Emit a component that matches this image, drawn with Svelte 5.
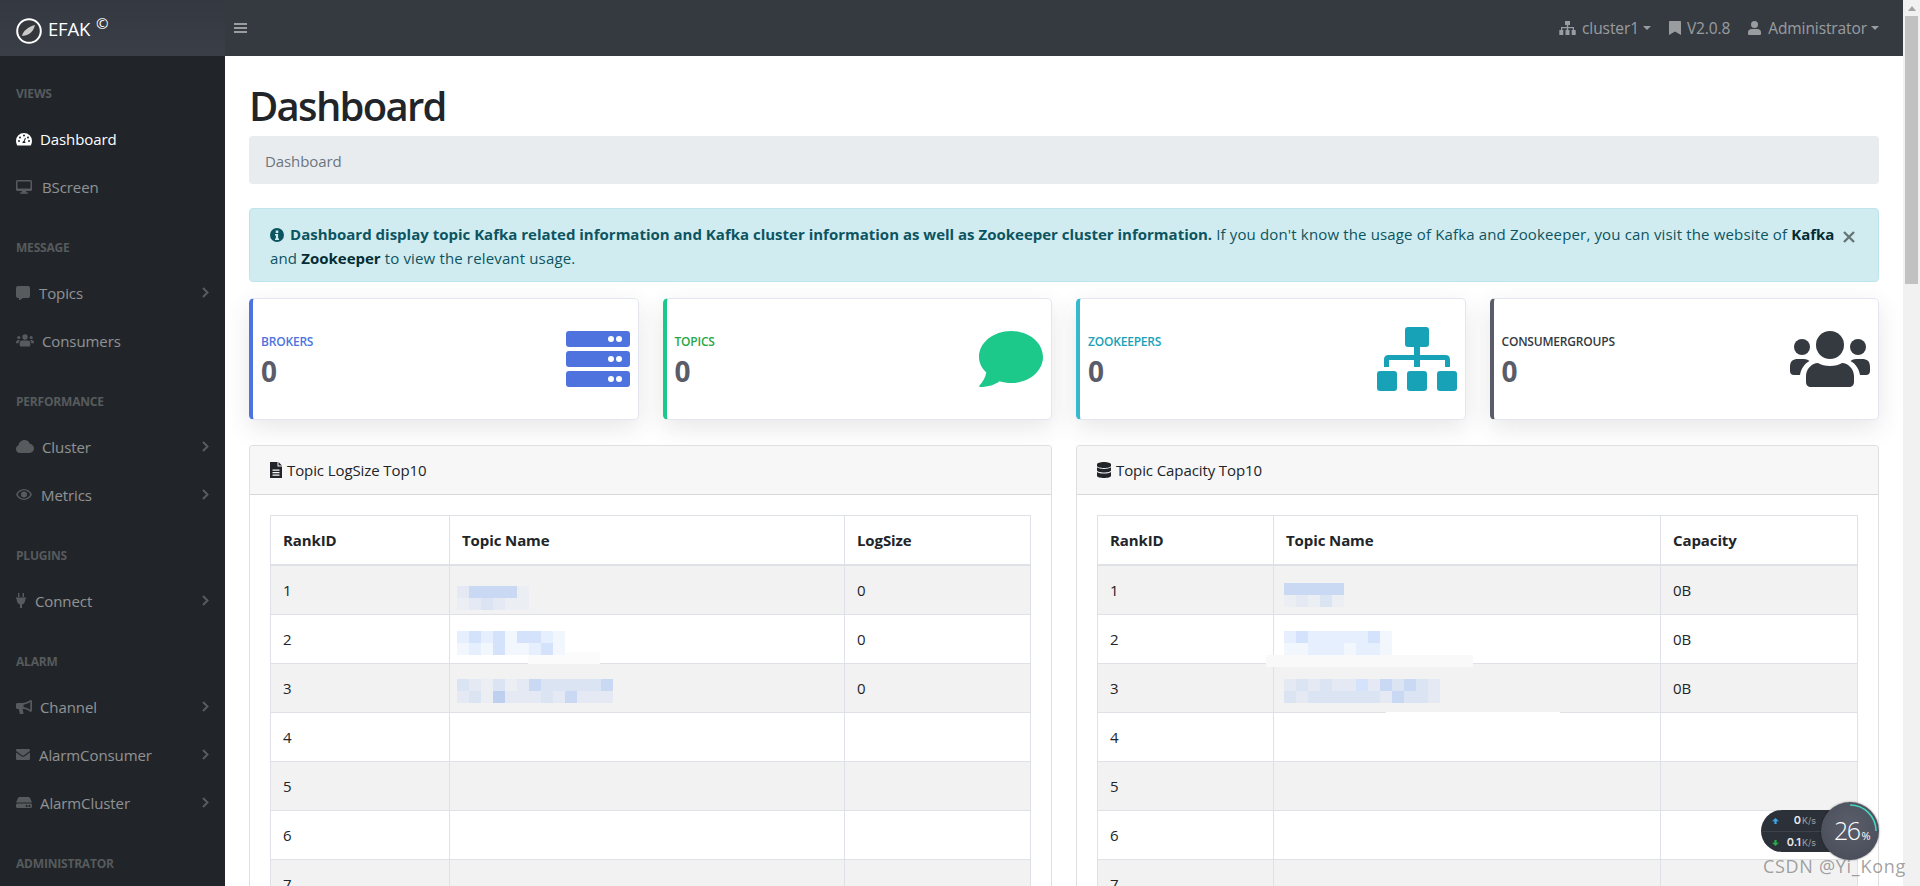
<script>
  const sideMenu = [
    { heading: 'VIEWS', items: [
      { label: 'Dashboard', icon: 'gauge', active: true, gap: 8 },
      { label: 'BScreen', icon: 'desktop', gap: 10 }
    ]},
    { heading: 'MESSAGE', items: [
      { label: 'Topics', icon: 'comment', more: true, gap: 9 },
      { label: 'Consumers', icon: 'users', gap: 8 }
    ]},
    { heading: 'PERFORMANCE', items: [
      { label: 'Cluster', icon: 'cloud', more: true, gap: 8 },
      { label: 'Metrics', icon: 'eye', more: true, gap: 9 }
    ]},
    { heading: 'PLUGINS', items: [
      { label: 'Connect', icon: 'plug', more: true, gap: 9 }
    ]},
    { heading: 'ALARM', items: [
      { label: 'Channel', icon: 'bullhorn', more: true, gap: 8 },
      { label: 'AlarmConsumer', icon: 'envelope', more: true, gap: 9 },
      { label: 'AlarmCluster', icon: 'hdd', more: true, gap: 8 }
    ]},
    { heading: 'ADMINISTRATOR', items: [] }
  ];

  const stats = [
    { label: 'BROKERS', tone: 'blue', icon: 'server' },
    { label: 'TOPICS', tone: 'green', icon: 'bubble' },
    { label: 'ZOOKEEPERS', tone: 'teal', icon: 'sitemap' },
    { label: 'CONSUMERGROUPS', tone: 'dark', icon: 'people' }
  ];

  const A = '#c9d8f3', B = '#dbe4f3', C = '#e4e9f3', D = '#d4e3fb', E = '#e6effd', F = '#f2f6fd', G = '#bed0f0', H = '#ebeef3';
  const panels = [
    { title: 'Topic LogSize Top10', icon: 'file', col: 'LogSize', unit: '0',
      widths: [179, 395, 186],
      masks: [
        { dx: 7, dy: 20, rows: [[C, A, A, A, A, H], [H, C, B, C, H, H]] },
        { dx: 7, dy: 16, rows: [[E, D, E, D, F, D, D, E, F], [F, E, F, D, F, F, E, D, F]],
          smear: { x: 78, y: 37, w: 72, h: 12, c: '#fbfbfb' } },
        { dx: 7, dy: 15, rows: [[B, C, H, B, H, C, A, B, B, B, B, B, A], [C, B, H, G, C, C, C, B, C, A, C, C, C]] }
      ] },
    { title: 'Topic Capacity Top10', icon: 'database', col: 'Capacity', unit: '0B',
      widths: [176, 387, 197],
      masks: [
        { dx: 10, dy: 17, rows: [[A, A, A, A, A], [H, C, H, B, H]] },
        { dx: 10, dy: 16, rows: [[E, D, E, E, E, E, E, D, F], [F, F, E, E, E, F, E, E, F]],
          smear: { x: -8, y: 40, w: 207, h: 12, c: '#f9f9f9' } },
        { dx: 10, dy: 15, rows: [[C, B, C, B, C, C, D, C, A, B, A, B, C], [B, C, B, B, B, B, B, B, C, A, B, B, C]],
          smear: { x: 112, y: 48, w: 174, h: 3, c: '#ffffff' } }
      ] }
  ];
  const rows = [1, 2, 3, 4, 5, 6, 7];
</script>

{#snippet glyph(name)}
  {#if name === 'gauge'}
    <svg class="ic" width="16" height="14" viewBox="0 0 16 14"><path fill-rule="evenodd" d="M8 1a8 8 0 0 0-8 8c0 1.500.4 2.800 1 4 .2.400.5.500 1 .5h12c.5 0 .8-.1 1-.5.6-1.200 1-2.500 1-4a8 8 0 0 0-8-8zM3 10a1 1 0 1 1 0-2 1 1 0 0 1 0 2zm1-3.500a1 1 0 1 1 0-2 1 1 0 0 1 0 2zM8 4.500a1 1 0 1 1 0-2 1 1 0 0 1 0 2zM9.500 11h-3c-.2-1 .4-1.800 1.200-2l1.300-3.200.9.400-1.300 3c.6.400 1 1 .9 1.800zM12 6.500a1 1 0 1 1 0-2 1 1 0 0 1 0 2zM13 10a1 1 0 1 1 0-2 1 1 0 0 1 0 2z"/></svg>
  {:else if name === 'desktop'}
    <svg class="ic" width="16" height="14" viewBox="0 0 16 14"><path fill-rule="evenodd" d="M1.500 0h13A1.500 1.500 0 0 1 16 1.500v8A1.500 1.500 0 0 1 14.500 11H10l.5 1.500H12v1.200H4v-1.200h1.500L6 11H1.500A1.500 1.500 0 0 1 0 9.500v-8A1.500 1.500 0 0 1 1.500 0zm0 1.500v7h13v-7z"/></svg>
  {:else if name === 'comment'}
    <svg class="ic" width="14" height="14" viewBox="0 0 14 14"><path d="M2 0h10a2 2 0 0 1 2 2v8a2 2 0 0 1-2 2H7l-3.500 2.300c-.3.200-.5 0-.5-.3V12H2a2 2 0 0 1-2-2V2a2 2 0 0 1 2-2z"/></svg>
  {:else if name === 'users'}
    <svg class="ic" width="18" height="13" viewBox="0 0 18 13"><circle cx="2.800" cy="3.500" r="1.600"/><circle cx="15.200" cy="3.500" r="1.600"/><circle cx="9" cy="3" r="2.700"/><path d="M0 9c0-2 1-3 2.500-3H4c-.8.800-1.300 1.800-1.300 3.300H.7C.3 9.300 0 9.300 0 9zM18 9c0-2-1-3-2.500-3H14c.8.800 1.300 1.800 1.300 3.300h2c.4 0 .7 0 .7-.3zM6 6.500h6c1.500 0 2.300 1.200 2.300 2.800v1.700c0 1-.5 1.500-1.500 1.500H5.200c-1 0-1.500-.5-1.500-1.500V9.300C3.700 7.700 4.500 6.500 6 6.500z"/></svg>
  {:else if name === 'cloud'}
    <svg class="ic" width="18" height="13" viewBox="0 0 18 13"><path d="M4 13a4 4 0 0 1-1.500-7.700C3 2.300 5.500 0 8.500 0c2.500 0 4.600 1.600 5.400 3.800C16.200 4.200 18 6.200 18 8.600 18 11 16 13 13.500 13z"/></svg>
  {:else if name === 'eye'}
    <svg class="ic" width="16" height="11" viewBox="0 0 16 11"><path fill-rule="evenodd" d="M8 0c3.600 0 6.500 2.200 8 5.500C14.500 8.800 11.600 11 8 11S1.500 8.800 0 5.500C1.500 2.200 4.400 0 8 0zm0 1.200C5.300 1.200 3 2.900 1.600 5.500 3 8.100 5.300 9.800 8 9.800s5-1.700 6.400-4.300C13 2.900 10.700 1.200 8 1.200zM8 2.500a3 3 0 1 1 0 6 3 3 0 0 1 0-6z"/></svg>
  {:else if name === 'plug'}
    <svg class="ic" width="10" height="15" viewBox="0 0 10 15"><path d="M2 0h1.400v4H2zM6.600 0H8v4H6.600zM0 4.500h10v1.400H9.200v1.400c0 2.200-1.500 3.800-3.200 4.100V15H4v-3.600C2.300 11.100.8 9.500.8 7.300V5.900H0z"/></svg>
  {:else if name === 'bullhorn'}
    <svg class="ic" width="16" height="14" viewBox="0 0 16 14"><path fill-rule="evenodd" d="M14.500 0c.8 0 1.500.6 1.500 1.400v9.200c0 .8-.7 1.400-1.500 1.400-3-2.400-5.500-3.200-8-3.300L7.500 13c.1.500-.3 1-.8 1H4.500c-.4 0-.7-.2-.8-.6L2.800 9H1.500C.7 9 0 8.300 0 7.500v-3C0 3.700.7 3 1.500 3h5c2.500 0 5-1 8-3zm-.2 2.100C12 3.700 9.800 4.500 7.500 4.700v2.600c2.300.2 4.500 1 6.800 2.600z"/></svg>
  {:else if name === 'envelope'}
    <svg class="ic" width="14" height="11" viewBox="0 0 14 11"><path d="M1.300 0h11.400C13.500 0 14 .5 14 1.300c0 .4-.2.800-.5 1L7.800 6.400c-.5.300-1.100.3-1.600 0L.5 2.300C.2 2.100 0 1.700 0 1.300 0 .5.500 0 1.300 0zM0 3.500l5.800 4c.7.500 1.700.5 2.400 0l5.800-4v6.200c0 .8-.6 1.300-1.300 1.300H1.300C.6 11 0 10.500 0 9.700z"/></svg>
  {:else if name === 'hdd'}
    <svg class="ic" width="16" height="11" viewBox="0 0 16 11"><path fill-rule="evenodd" d="M3.500 0h9c.7 0 1.200.4 1.500 1l2 4.500H0L2 1c.3-.6.800-1 1.500-1zM1.500 6.500h13c.8 0 1.500.7 1.500 1.500v1.500c0 .8-.7 1.500-1.500 1.500h-13C.7 11 0 10.300 0 9.500V8c0-.8.700-1.500 1.500-1.500zM11 8a1 1 0 1 0 0 1.900A1 1 0 0 0 11 8zm2.800 0a1 1 0 1 0 0 1.900 1 1 0 0 0 0-1.900z"/></svg>
  {:else if name === 'file'}
    <svg class="ic" width="12" height="16" viewBox="0 0 12 16"><path fill-rule="evenodd" d="M0 0h7.500v4.500H12V16H0zM8.500 0 12 3.500H8.500zM2.500 7.500v1.300h7V7.500zm0 2.500v1.300h7V10zm0 2.500v1.300h7v-1.300z"/></svg>
  {:else if name === 'database'}
    <svg class="ic" width="14" height="16" viewBox="0 0 14 16"><path d="M7 0c3.900 0 7 1 7 2.300v1.400C14 5 10.900 6 7 6S0 5 0 3.700V2.300C0 1 3.100 0 7 0zM0 5.300C1.500 6.500 4.200 7 7 7s5.500-.5 7-1.700v2.900c0 1.300-3.100 2.300-7 2.300S0 9.500 0 8.200zM0 9.900c1.500 1.100 4.200 1.700 7 1.700s5.500-.6 7-1.700v3.800c0 1.300-3.100 2.300-7 2.300s-7-1-7-2.300z"/></svg>
  {:else if name === 'server'}
    <svg class="big blue" width="64" height="56" viewBox="0 0 64 56">
      {#each [0, 20, 40] as y}
        <rect x="0" y={y} width="64" height="16" rx="3"/>
        <circle cx="45" cy={y + 8} r="3" fill="#fff"/>
        <circle cx="53" cy={y + 8} r="3" fill="#fff"/>
      {/each}
    </svg>
  {:else if name === 'bubble'}
    <svg class="big green" width="64" height="56" viewBox="0 0 64 56"><path d="M32 0c17.700 0 32 11.600 32 26S49.700 52 32 52c-4 0-8-.6-11.500-1.800C16.500 53.500 9 56 1 56c-.8 0-1.200-.9-.5-1.500 3.500-3.700 6-8.500 6.800-13C2.700 37 0 31.800 0 26 0 11.600 14.300 0 32 0z"/></svg>
  {:else if name === 'sitemap'}
    <svg class="big teal" width="80" height="64" viewBox="0 0 80 64"><rect x="28" y="0" width="24" height="20" rx="3"/><rect x="37" y="20" width="6" height="8"/><path d="M7 40v-7c0-4 2-5 5-5h56c3 0 5 1 5 5v7h-5v-7H43v7h-6v-7H12v7z"/><rect x="0" y="44" width="20" height="20" rx="3"/><rect x="30" y="44" width="20" height="20" rx="3"/><rect x="60" y="44" width="20" height="20" rx="3"/></svg>
  {:else if name === 'people'}
    <svg class="big dark" width="80" height="56" viewBox="0 0 80 56"><ellipse cx="12" cy="16" rx="8" ry="8"/><ellipse cx="68" cy="16" rx="8" ry="8"/><circle cx="40" cy="14" r="14"/><path d="M0 36c0-6 3-8 8-8h6c2 0 4 .7 5.500 2C14 33 11 38 10 44H4c-2.500 0-4-1.500-4-4zM80 36c0-6-3-8-8-8h-6c-2 0-4 .7-5.500 2C66 33 69 38 70 44h6c2.500 0 4-1.500 4-4zM28 32c3 2 7 3 12 3s9-1 12-3c6 0 12 6 12 13v6c0 3-2 5-5 5H21c-3 0-5-2-5-5v-6c0-7 6-13 12-13z"/></svg>
  {/if}
{/snippet}

<div class="screen">
  <div class="page">
    <header class="topbar">
      <div class="brand">
        <svg class="logo" width="26" height="26" viewBox="0 0 26 26"><circle cx="13" cy="13" r="11.800" fill="#34373c" stroke="#fff" stroke-width="2"/><path d="M6 18c1-5 6-9 13-11-1 5-5 10-10 10.500-1 0-2 .2-3 .5z" fill="#c9c9c9"/></svg>
        <span class="brand-name">EFAK</span><sup class="brand-mark">©</sup>
      </div>
      <div class="burger"><span></span><span></span><span></span></div>
      <nav class="top-links">
        <span class="top-link gap-6">
          <svg class="ic" width="17" height="14" viewBox="0 0 17 14"><path d="M6 0h5v4H9.200v2H15v3h1.700v5h-4V9h1.100V7.200H9.200V9h1.300v5h-4V9h1.300V7.200H3.200V9h1.100v5h-4V9H2V6h5.800V4H6z"/></svg>
          cluster1<i class="caret"></i>
        </span>
        <span class="top-link gap-6">
          <svg class="ic" width="12" height="14" viewBox="0 0 12 14"><path d="M0 1c0-.6.4-1 1-1h10c.6 0 1 .4 1 1v13L6 10.500 0 14z"/></svg>
          V2.0.8
        </span>
        <span class="top-link gap-7">
          <svg class="ic" width="13" height="14" viewBox="0 0 13 14"><circle cx="6.500" cy="3.500" r="3.500"/><path d="M3.500 8h6c2 0 3.500 1.500 3.500 3.500v1.200c0 .8-.5 1.300-1.300 1.300H1.300C.5 14 0 13.500 0 12.700v-1.200C0 9.500 1.500 8 3.500 8z"/></svg>
          Administrator<i class="caret"></i>
        </span>
      </nav>
    </header>

    <div class="body">
      <aside class="side">
        {#each sideMenu as sec}
          <div class="side-head">{sec.heading}</div>
          {#each sec.items as it}
            <div class="side-link" class:active={it.active}>
              <span class="side-ic" style:margin-right="{it.gap}px">{@render glyph(it.icon)}</span>
              <span>{it.label}</span>
              {#if it.more}
                <svg class="chev" width="7" height="11" viewBox="0 0 7 11"><path d="M1 1l4.500 4.500L1 10" fill="none" stroke="currentColor" stroke-width="2"/></svg>
              {/if}
            </div>
          {/each}
        {/each}
      </aside>

      <main class="main">
        <h1>Dashboard</h1>
        <div class="crumb">Dashboard</div>

        <div class="alert">
          <button class="close" aria-label="Close">
            <svg width="12" height="12" viewBox="0 0 12 12"><path d="M1 1l10 10M11 1L1 11" fill="none" stroke="currentColor" stroke-width="2.400"/></svg>
          </button>
          <svg class="ic info" width="14" height="14" viewBox="0 0 14 14"><path fill-rule="evenodd" d="M7 0a7 7 0 1 1 0 14A7 7 0 0 1 7 0zM5.700 2.600v2.300h2.600V2.600zM5 6v1.600h.9v2.800H5V12h4v-1.600h-.9V6z"/></svg>
          <strong>Dashboard display topic Kafka related information and Kafka cluster information as well as Zookeeper cluster information.</strong>
          If you don't know the usage of Kafka and Zookeeper, you can visit the website of <b>Kafka</b> and <b>Zookeeper</b> to view the relevant usage.
        </div>

        <section class="stats">
          {#each stats as s}
            <div class="stat {s.tone}">
              <div class="stat-text">
                <div class="stat-label">{s.label}</div>
                <div class="stat-num">0</div>
              </div>
              {@render glyph(s.icon)}
            </div>
          {/each}
        </section>

        <section class="panels">
          {#each panels as p}
            <div class="panel">
              <div class="panel-head">{@render glyph(p.icon)}<span>{p.title}</span></div>
              <div class="panel-body">
                <table>
                  <colgroup>
                    {#each p.widths as w}<col style:width="{w}px" />{/each}
                  </colgroup>
                  <thead><tr><th>RankID</th><th>Topic Name</th><th>{p.col}</th></tr></thead>
                  <tbody>
                    {#each rows as r, i}
                      <tr>
                        <td>{r}</td>
                        <td class="name">
                          {#if p.masks[i]}
                            {#if p.masks[i].smear}
                              <span class="smear"
                                style:left="{p.masks[i].smear.x}px"
                                style:top="{p.masks[i].smear.y}px"
                                style:width="{p.masks[i].smear.w}px"
                                style:height="{p.masks[i].smear.h}px"
                                style:background={p.masks[i].smear.c}></span>
                            {/if}
                            <span class="mask" style:left="{p.masks[i].dx}px" style:top="{p.masks[i].dy}px">
                              {#each p.masks[i].rows as line}
                                <span class="mask-row">
                                  {#each line as c}<span class="cell" style:background={c}></span>{/each}
                                </span>
                              {/each}
                            </span>
                          {/if}
                        </td>
                        <td>{i < 3 ? p.unit : ''}</td>
                      </tr>
                    {/each}
                  </tbody>
                </table>
              </div>
            </div>
          {/each}
        </section>
      </main>
    </div>
  </div>

  <div class="scrollbar">
    <div class="arrow"></div>
    <div class="thumb"></div>
  </div>

  <div class="meter">
    <div class="pill">
      <div class="rate">
        <svg class="arrow-ic up" width="7" height="6" viewBox="0 0 7 6"><path d="M3.500 0L7 3.300H4.600V6H2.400V3.300H0z"/></svg>
        <b>0</b><small>K/s</small>
      </div>
      <div class="rate sep">
        <svg class="arrow-ic down" width="7" height="6" viewBox="0 0 7 6"><path d="M3.500 6L7 2.700H4.600V0H2.400v2.700H0z"/></svg>
        <b>0.1</b><small>K/s</small>
      </div>
    </div>
    <div class="dial">
      <svg width="58" height="58" viewBox="0 0 58 58"><path d="M29 3a26 26 0 0 1 26 26" fill="none" stroke="#45d6bd" stroke-width="1.500"/></svg>
      <span class="pct">26<em>%</em></span>
    </div>
  </div>
  <div class="mark">CSDN @Yi_Kong</div>
</div>

<style>
  :global(body) {
    margin: 0;
    overflow: hidden;
    background: #fff;
  }
  .screen {
    position: relative;
    display: flex;
    width: 1920px;
    height: 886px;
    overflow: hidden;
    font-family: "Open Sans", "Noto Sans", "Liberation Sans", sans-serif;
    font-size: 15px;
    line-height: 24px;
    letter-spacing: -0.1px;
    color: #212529;
  }
  .page {
    display: flex;
    flex-direction: column;
    width: 1903px;
    flex: none;
    min-width: 0;
  }
  .ic {
    display: block;
    fill: currentColor;
    flex: none;
  }

  /* top bar */
  .topbar {
    display: flex;
    align-items: center;
    flex: none;
    height: 56px;
    background: #343a40;
    color: rgba(255, 255, 255, 0.5);
  }
  .brand {
    display: flex;
    align-items: center;
    width: 225px;
    height: 56px;
    padding-left: 16px;
    box-sizing: border-box;
    background: linear-gradient(#343840, #3a3e47);
    color: #fff;
    flex: none;
  }
  .logo {
    margin-top: 5px;
  }
  .brand-name {
    margin-left: 6px;
    font-size: 18.500px;
    letter-spacing: -0.2px;
    margin-top: 2px;
  }
  .brand-mark {
    font-size: 15px;
    line-height: 1;
    margin: -10px 0 0 6px;
  }
  .burger {
    display: flex;
    flex-direction: column;
    gap: 2px;
    margin-left: 9px;
    width: 13px;
  }
  .burger span {
    height: 2px;
    background: rgba(255, 255, 255, 0.5);
  }
  .top-links {
    display: flex;
    align-items: center;
    margin-left: auto;
    margin-right: 24px;
    gap: 18px;
    font-size: 15.500px;
  }
  .top-link {
    display: flex;
    align-items: center;
  }
  .gap-6 { gap: 6px; }
  .gap-7 { gap: 7px; }
  .caret {
    width: 0;
    height: 0;
    margin-left: -2px;
    border-top: 4.500px solid currentColor;
    border-left: 4.500px solid transparent;
    border-right: 4.500px solid transparent;
  }
  .gap-7 .caret {
    margin-left: -3px;
  }

  .body {
    display: flex;
    flex: 1;
    min-height: 0;
  }

  /* sidebar */
  .side {
    width: 225px;
    flex: none;
    background: #212529;
    color: rgba(255, 255, 255, 0.5);
    overflow: hidden;
  }
  .side-head {
    padding: 29px 16px 11px;
    font-size: 12px;
    line-height: 18px;
    font-weight: 700;
    letter-spacing: -0.2px;
    color: rgba(255, 255, 255, 0.25);
  }
  .side-link {
    display: flex;
    align-items: center;
    height: 48px;
    padding: 1px 16px 0;
    box-sizing: border-box;
  }
  .side-link.active {
    color: #fff;
  }
  .side-ic {
    display: block;
    color: rgba(255, 255, 255, 0.25);
  }
  .active .side-ic {
    color: #fff;
  }
  .chev {
    margin-left: auto;
    color: rgba(255, 255, 255, 0.25);
  }

  /* main */
  .main {
    flex: 1;
    min-width: 0;
    padding: 24px 24px 0;
    overflow: hidden;
  }
  h1 {
    margin: 0 0 6px;
    padding-top: 2px;
    font-size: 40px;
    line-height: 48px;
    font-weight: 600;
    letter-spacing: -1.700px;
  }
  .crumb {
    height: 48px;
    padding: 0 16px;
    line-height: 50px;
    margin-bottom: 24px;
    background: #e9ecef;
    border-radius: 4px;
    color: #6c757d;
  }
  .alert {
    position: relative;
    height: 74px;
    box-sizing: border-box;
    padding: 13px 38px 11px 20px;
    margin-bottom: 16px;
    background: #d1ecf1;
    border: 1px solid #bee5eb;
    border-radius: 4px;
    color: #0c5460;
    letter-spacing: 0.15px;
  }
  .alert strong {
    letter-spacing: 0;
  }
  .alert b {
    color: #062c33;
    letter-spacing: 0;
  }
  .info {
    display: inline-block;
    vertical-align: -2px;
    margin-right: 2px;
  }
  .close {
    position: absolute;
    top: 22px;
    right: 23px;
    display: block;
    width: 12px;
    height: 12px;
    padding: 0;
    border: 0;
    background: none;
    color: #000;
    opacity: 0.5;
  }
  .close svg {
    display: block;
  }
  .stats {
    display: grid;
    grid-template-columns: repeat(4, 1fr);
    gap: 24px;
    margin-bottom: 25px;
  }
  .stat {
    display: flex;
    align-items: center;
    justify-content: space-between;
    height: 122px;
    box-sizing: border-box;
    padding: 0 8px;
    background: #fff;
    border: 1px solid #e3e6f0;
    border-left: 4px solid;
    border-radius: 5px;
    box-shadow: 0 8px 24px rgba(58, 59, 69, 0.12);
  }
  .stat-text {
    margin-top: 6px;
  }
  .stat-label {
    font-size: 12px;
    line-height: 18px;
    font-weight: 600;
    letter-spacing: -0.2px;
  }
  .stat-num {
    font-size: 28px;
    line-height: 40px;
    font-weight: 700;
    color: #5a5c69;
  }
  .blue { border-left-color: #4e73df; color: #4e73df; }
  .green { border-left-color: #1cc88a; color: #28a745; }
  .teal { border-left-color: #36b9cc; color: #17a2b8; }
  .dark { border-left-color: #5a5c69; color: #343a40; }
  .big {
    display: block;
    flex: none;
    fill: currentColor;
  }
  .big.blue { fill: #4e73df; }
  .big.green { fill: #1cc88a; }
  .big.teal { fill: #17a2b8; }
  .big.dark { fill: #343a40; }

  .panels {
    display: grid;
    grid-template-columns: 803px 803px;
    gap: 24px;
  }
  .panel {
    border: 1px solid rgba(0, 0, 0, 0.125);
    border-radius: 4px;
    background: #fff;
  }
  .panel-head {
    display: flex;
    align-items: center;
    gap: 5px;
    height: 48px;
    padding: 0 20px;
    background: #f7f7f7;
    border-bottom: 1px solid rgba(0, 0, 0, 0.125);
    border-radius: 3px 3px 0 0;
  }
  .panel-body {
    padding: 20px 20px 0;
  }
  table {
    width: 760px;
    table-layout: fixed;
    border-collapse: collapse;
  }
  th, td {
    padding: 12px;
    text-align: left;
    border: 1px solid #dee2e6;
    box-sizing: content-box;
    line-height: 24px;
    height: 24px;
  }
  th {
    font-weight: 700;
    border-bottom-width: 2px;
  }
  tbody tr:nth-child(odd) {
    background: #f2f2f2;
  }
  .name {
    position: relative;
  }
  .mask,
  .smear {
    position: absolute;
    display: block;
  }
  .mask-row {
    display: flex;
  }
  .cell {
    width: 12px;
    height: 12px;
  }

  /* scrollbar */
  .scrollbar {
    width: 17px;
    flex: none;
    background: #f1f1f1;
  }
  .arrow {
    width: 0;
    height: 0;
    margin: 6px auto 5px;
    border-left: 4px solid transparent;
    border-right: 4px solid transparent;
    border-bottom: 5px solid #a3a3a3;
  }
  .thumb {
    width: 13px;
    height: 268px;
    margin: 0 auto;
    background: #c1c1c1;
  }

  /* floating network meter */
  .meter {
    position: absolute;
    left: 1761px;
    top: 802px;
    width: 118px;
    height: 58px;
  }
  .pill {
    position: absolute;
    left: 0;
    top: 8px;
    width: 88px;
    height: 42px;
    background: #2c3038;
    border-radius: 21px;
    color: #e8e8e8;
    font-family: "Inter", "Open Sans", sans-serif;
    letter-spacing: 0;
  }
  .rate {
    position: relative;
    display: flex;
    align-items: baseline;
    justify-content: flex-end;
    height: 21px;
    padding-right: 33px;
    line-height: 21px;
    box-sizing: border-box;
  }
  .rate.sep {
    border-top: 1px solid #3c414a;
  }
  .rate b {
    font-size: 11px;
    font-weight: 600;
  }
  .rate small {
    margin-left: 1px;
    font-size: 9px;
    color: #9aa0a8;
  }
  .arrow-ic {
    position: absolute;
    left: 11px;
    top: 8px;
  }
  .up { fill: #3aa6e8; }
  .down { fill: #2aa84a; }
  .dial {
    position: absolute;
    left: 60px;
    top: 0;
    width: 58px;
    height: 58px;
    border-radius: 50%;
    background: radial-gradient(circle at 50% 40%, #5a5e6b, #474b57);
    box-shadow: 0 0 2px rgba(0, 0, 0, 0.5);
    color: #fff;
  }
  .dial svg {
    position: absolute;
    left: 0;
    top: 0;
  }
  .pct {
    position: absolute;
    left: 13px;
    top: 13px;
    font-family: "Open Sans", sans-serif;
    font-size: 25px;
    font-weight: 300;
    letter-spacing: -1.500px;
    line-height: 30px;
  }
  .pct em {
    font-style: normal;
    font-size: 11px;
    font-weight: 400;
    margin-left: 2px;
    letter-spacing: 0;
  }
  .mark {
    position: absolute;
    left: 1763px;
    top: 854px;
    font-size: 18px;
    line-height: 24px;
    letter-spacing: 0.7px;
    color: rgba(110, 110, 110, 0.65);
  }
</style>
